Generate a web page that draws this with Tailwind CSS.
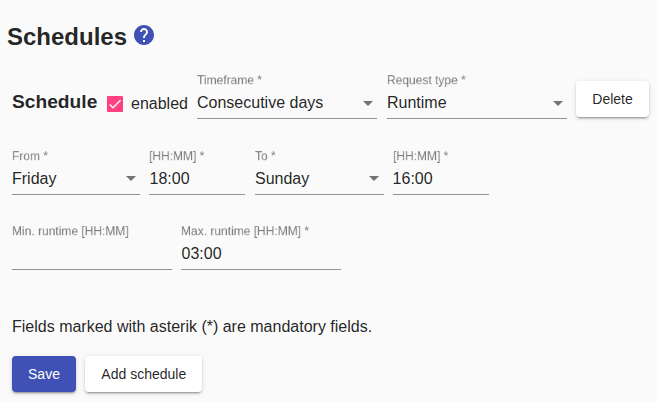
<!DOCTYPE html>
<html lang="en">
<head>
<meta charset="utf-8">
<title>Schedules</title>
<script src="https://cdn.jsdelivr.net/npm/@tailwindcss/browser@4"></script>
</head>
<body class="h-[402px] overflow-hidden bg-[#fafafa] font-['Liberation_Sans',Arial,sans-serif] text-base text-black/87">
<main class="flex flex-col">
  <header class="flex h-[73px] items-start pl-[7px] pt-[21px]">
    <h1 class="text-2xl leading-8 font-bold">Schedules</h1>
    <svg class="ml-[5px] mt-[2px] size-6" viewBox="0 0 24 24" fill="#3f51b5"><path d="M12 2C6.480 2 2 6.480 2 12s4.480 10 10 10 10-4.480 10-10S17.520 2 12 2zm1 17h-2v-2h2v2zm2.070-7.750l-.9.920C13.450 12.900 13 13.500 13 15h-2v-.5c0-1.100.45-2.100 1.170-2.830l1.240-1.260c.37-.36.59-.86.59-1.410 0-1.100-.9-2-2-2s-2 .9-2 2H8c0-2.210 1.790-4 4-4s4 1.790 4 4c0 .88-.36 1.680-.93 2.250z"/></svg>
  </header>

  <section class="flex h-[76px] items-start pl-3">
    <h2 class="mt-[17px] w-[95px] text-[19.2px] leading-6 font-bold">Schedule</h2>
    <label class="mt-[21px] flex w-[90px] items-center">
      <span class="grid size-4 place-items-center rounded-[1px] bg-[#ff4081]"><svg class="size-4" viewBox="0 0 24 24" fill="none" stroke="#fafafa" stroke-width="2.13"><path d="M4.100 12.700 9 17.600 20.300 6.300"/></svg></span>
      <span class="ml-2 leading-5">enabled</span>
    </label>
    <div class="h-[46px] w-[180px] border-b border-black/42">
      <div class="h-4 w-[133%] origin-top-left scale-75 leading-5 whitespace-nowrap text-black/54 will-change-transform">Timeframe *</div>
      <div class="mt-1 flex items-center justify-between leading-5"><span>Consecutive days</span><i class="mr-1 mt-px border-x-5 border-t-5 border-x-transparent border-t-black/54"></i></div>
    </div>
    <div class="ml-[10px] h-[46px] w-[180px] border-b border-black/42">
      <div class="h-4 w-[133%] origin-top-left scale-75 leading-5 whitespace-nowrap text-black/54 will-change-transform">Request type *</div>
      <div class="mt-1 flex items-center justify-between leading-5"><span>Runtime</span><i class="mr-1 mt-px border-x-5 border-t-5 border-x-transparent border-t-black/54"></i></div>
    </div>
    <button class="ml-[9px] mt-2 h-9 w-[73px] rounded bg-white text-sm shadow-[0_3px_1px_-2px_rgba(0,0,0,.2),0_2px_2px_0_rgba(0,0,0,.14),0_1px_5px_0_rgba(0,0,0,.12)]">Delete</button>
  </section>

  <section class="flex h-[75px] items-start pl-3">
    <div class="h-[46px] w-32 border-b border-black/42">
      <div class="h-4 w-[133%] origin-top-left scale-75 leading-5 whitespace-nowrap text-black/54 will-change-transform">From *</div>
      <div class="mt-1 flex items-center justify-between leading-5"><span>Friday</span><i class="mr-1 -mt-px border-x-5 border-t-5 border-x-transparent border-t-black/54"></i></div>
    </div>
    <div class="ml-[9px] h-[46px] w-24 border-b border-black/42">
      <div class="h-4 w-[133%] origin-top-left scale-75 leading-5 whitespace-nowrap text-black/54 will-change-transform">[HH:MM] *</div>
      <div class="mt-1 pl-[.5px] leading-5">18:00</div>
    </div>
    <div class="ml-[10px] h-[46px] w-[129px] border-b border-black/42">
      <div class="h-4 w-[133%] origin-top-left scale-75 leading-5 whitespace-nowrap text-black/54 will-change-transform">To *</div>
      <div class="mt-1 flex items-center justify-between leading-5"><span>Sunday</span><i class="mr-[5px] -mt-px border-x-5 border-t-5 border-x-transparent border-t-black/54"></i></div>
    </div>
    <div class="ml-[9px] h-[46px] w-24 border-b border-black/42">
      <div class="h-4 w-[133%] origin-top-left scale-75 leading-5 whitespace-nowrap text-black/54 will-change-transform">[HH:MM] *</div>
      <div class="mt-1 -ml-[.4px] leading-5">16:00</div>
    </div>
  </section>

  <section class="flex h-[93px] items-start gap-[9px] pl-3">
    <div class="h-[46px] w-40 border-b border-black/42">
      <div class="h-4 w-[133%] origin-top-left scale-75 leading-5 whitespace-nowrap text-black/54 will-change-transform">Min. runtime [HH:MM]</div>
    </div>
    <div class="h-[46px] w-40 border-b border-black/42">
      <div class="h-4 w-[133%] origin-top-left scale-75 leading-5 whitespace-nowrap text-black/54 will-change-transform">Max. runtime [HH:MM] *</div>
      <div class="mt-1 pl-[.5px] leading-5">03:00</div>
    </div>
  </section>

  <p class="h-[39px] pl-3 leading-5">Fields marked with asterik (*) are mandatory fields.</p>

  <footer class="flex gap-[9px] pl-3">
    <button class="h-9 w-16 rounded bg-[#3f51b5] text-sm text-white shadow-[0_3px_1px_-2px_rgba(0,0,0,.2),0_2px_2px_0_rgba(0,0,0,.14),0_1px_5px_0_rgba(0,0,0,.12)]">Save</button>
    <button class="h-9 w-[117px] rounded bg-white pl-[.5px] text-sm shadow-[0_3px_1px_-2px_rgba(0,0,0,.2),0_2px_2px_0_rgba(0,0,0,.14),0_1px_5px_0_rgba(0,0,0,.12)]">Add schedule</button>
  </footer>
</main>
</body>
</html>
